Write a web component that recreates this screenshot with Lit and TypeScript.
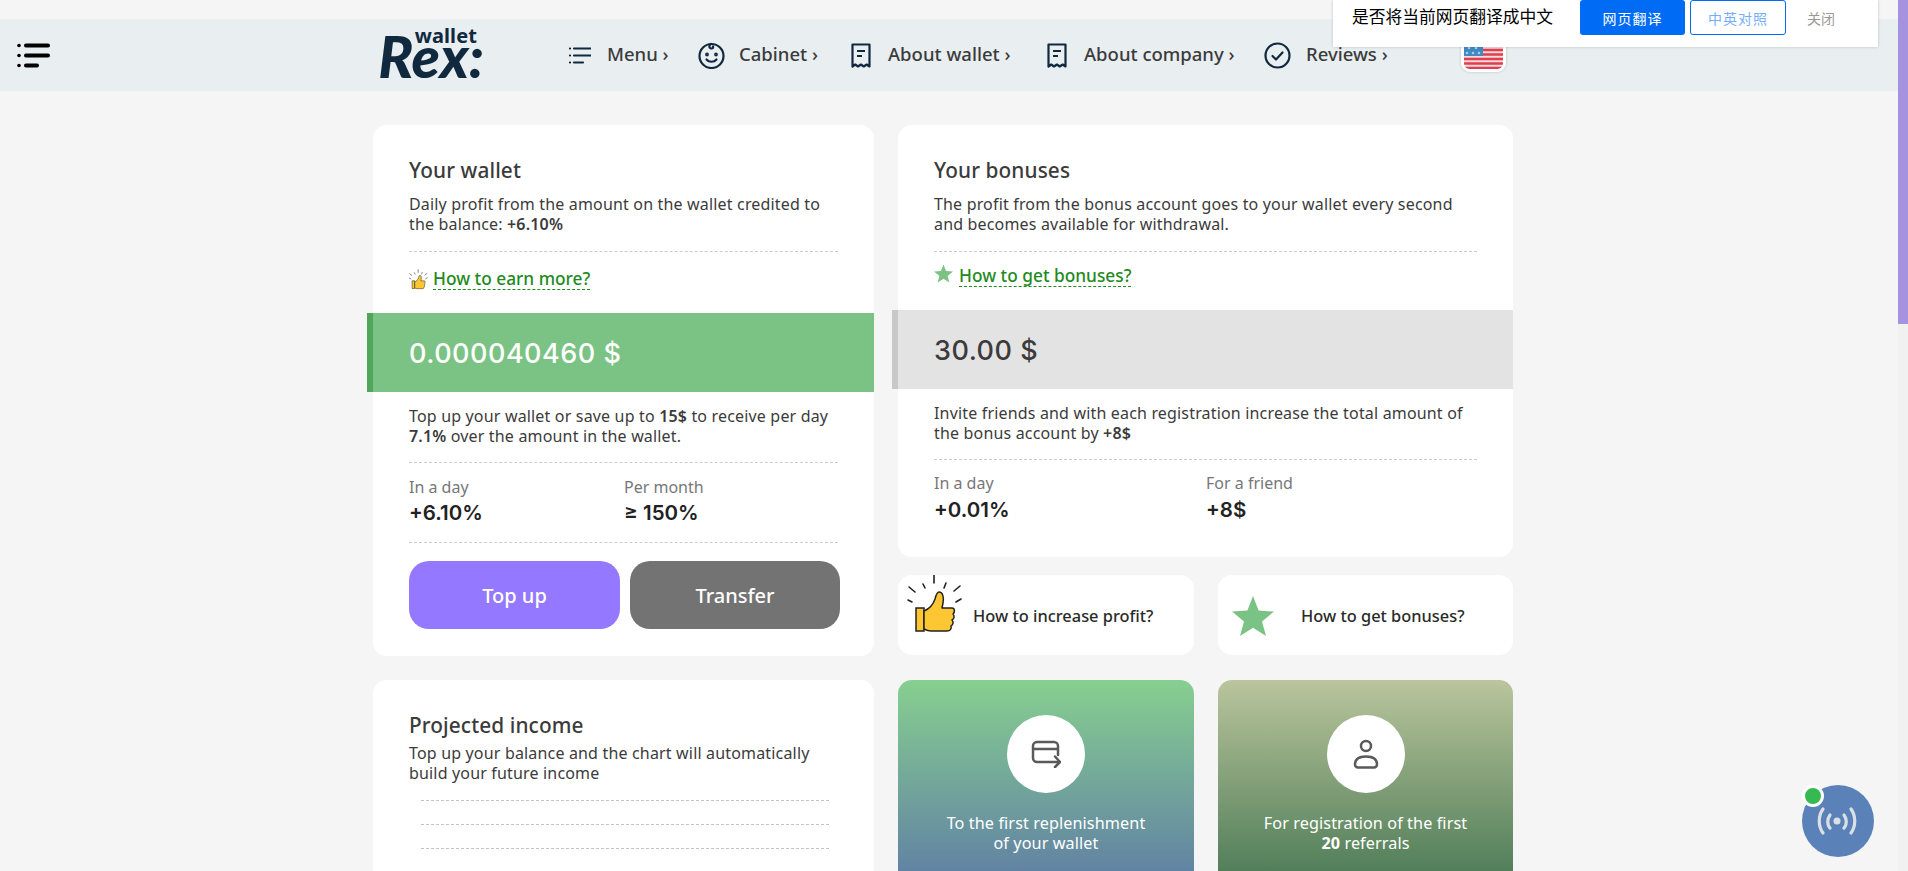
import { LitElement, html, css, svg } from 'lit';
import { customElement } from 'lit/decorators.js';

const receipt = svg`<path d="M1.5 1.5h17v22l-2.8-2-2.9 2-2.9-2-2.9 2-2.8-2-2.7 2z" fill="none" stroke="#10293f" stroke-width="2.2" stroke-linejoin="round"/><path d="M6 8h8M6 13h5" stroke="#10293f" stroke-width="2.2" fill="none"/>`;

const thumb = html`<svg class="thumb" viewBox="0 0 56 58">
  <path d="M27 0v8M2 12l6 5M16 9l2 4M39 8l-2 5M53 11l-6 5M1 25l4 2M54 24l-5 3" stroke="#222" stroke-width="1.6" fill="none" stroke-linecap="round"/>
  <rect x="9" y="33" width="8" height="23" fill="#fdc633" stroke="#222" stroke-width="1.5"/>
  <path d="M17 36c5-2 9-6 11-12 1-4 2-7 4-7 4 0 5 6 4 11l-1 5h10c3 0 3 4 1 6 2 2 1 5-1 6 2 2 1 5-1 6 1 3-1 5-4 5H24c-3 0-5-1-7-2z" fill="#fdc633" stroke="#222" stroke-width="1.5" stroke-linejoin="round"/>
</svg>`;

const star = html`<svg class="star" viewBox="0 0 42 40"><path d="M21 0l5.600 14.600L42 15.500 30 25.400 34 40 21 31.800 8 40l4-14.600L0 15.500l15.400-.9z" fill="#7bc384"/></svg>`;

@customElement('app-root')
export class AppRoot extends LitElement {
  static styles = css`
    :host {
      display: block;
      position: relative;
      height: 100vh;
      overflow: hidden;
      background: #f5f5f5;
      font-family: 'Noto Sans', sans-serif;
      color: #3b3b3b;
    }

    /* header */
    .header {
      display: flex;
      align-items: center;
      width: 1898px;
      height: 72px;
      margin-top: 19px;
      padding-left: 17px;
      box-sizing: border-box;
      background: #e9eef1;
    }
    .burger {
      width: 33px;
      height: 25px;
      flex: none;
    }
    .logo {
      display: flex;
      flex-direction: column;
      align-items: flex-end;
      width: 104px;
      margin: 0 0 5px 330px;
      color: #10293f;
      line-height: 1;
      flex: none;
    }
    .logo-top {
      font: 700 20px/14px 'Noto Sans', sans-serif;
      margin-right: 7px;
      margin-bottom: -7px;
      letter-spacing: 0.1px;
    }
    .logo-main {
      font: italic 900 58px/40px Lato, sans-serif;
      letter-spacing: 0;
    }
    .nav {
      display: grid;
      grid-template-columns: 129px 153px 196px 217px 197px;
      margin-left: 85px;
      flex: none;
    }
    .nav-item {
      display: flex;
      align-items: center;
      gap: 16px;
      font-size: 18.5px;
      font-weight: 500;
      white-space: nowrap;
      height: 28px;
    }
    .nav-item span {
      margin-top: -3px;
    }
    .nav-item.cabinet { gap: 14px; }
    .nav-item.doc { gap: 17px; }
    .nav-item.reviews { gap: 15px; }
    .flag {
      flex: none;
      width: 45px;
      height: 45px;
      margin-bottom: 11px;
      box-sizing: border-box;
      border: 3px solid #fff;
      border-radius: 9px;
      overflow: hidden;
      box-shadow: 0 0 3px rgba(0, 0, 0, 0.2);
    }
    .flag svg {
      display: block;
      width: 100%;
      height: 100%;
    }

    /* layout */
    .main {
      display: grid;
      grid-template-columns: 501px 615px;
      column-gap: 24px;
      margin: 34px 0 0 373px;
      align-items: start;
    }
    .col {
      display: flex;
      flex-direction: column;
    }
    .gap-left {
      gap: 24px;
    }
    .card {
      background: #fff;
      border-radius: 14px;
      padding: 33px 0 27px;
    }
    .inner {
      padding: 0 36px;
    }
    .title {
      font-size: 20.8px;
      font-weight: 500;
      line-height: 24px;
      letter-spacing: 0.1px;
    }
    .text {
      font-size: 16px;
      line-height: 20px;
      letter-spacing: 0.17px;
      white-space: nowrap;
    }
    .text b {
      font-weight: 600;
    }
    .after-title {
      margin-top: 12px;
    }
    .dash {
      border-top: 1px dashed #ccc;
    }
    .link-row {
      display: flex;
      align-items: flex-start;
      gap: 5px;
    }
    .link {
      display: block;
      color: #1f8a22;
      font-size: 17.3px;
      font-weight: 500;
      line-height: 20px;
      border-bottom: 1px dashed #1f8a22;
      white-space: nowrap;
    }
    .thumb {
      display: block;
      width: 19px;
      height: 21px;
      flex: none;
    }
    .star {
      display: block;
      width: 19px;
      height: 19px;
      flex: none;
    }
    .band {
      display: flex;
      align-items: center;
      height: 79px;
      box-sizing: border-box;
      margin-left: -6px;
      padding: 2px 0 0 36px;
      border-left: 6px solid;
      font-family: Inter, sans-serif;
      font-size: 27px;
      font-weight: 500;
      letter-spacing: 0.5px;
    }
    .band.green {
      background: #7bc384;
      border-color: #4fa55a;
      color: #fff;
    }
    .band.grey {
      background: #e3e3e3;
      border-color: #c8c8c8;
      color: #3b3b3b;
    }
    .stats {
      display: grid;
    }
    .label {
      color: #777;
      font-size: 16px;
      line-height: 20px;
    }
    .value {
      color: #222;
      font-family: Inter, sans-serif;
      font-size: 20.5px;
      font-weight: 600;
      line-height: 26px;
    }

    /* wallet card spacing */
    .wallet .dash-a { margin-top: 17px; }
    .wallet .link-row { margin-top: 12px; padding-top: 5px; }
    .wallet .band { margin-top: 23px; }
    .wallet .after-band { margin-top: 14px; }
    .wallet .dash-b { margin-top: 16px; }
    .wallet .stats { grid-template-columns: 215px 1fr; margin-top: 14px; }
    .wallet .value { margin-top: 3px; }
    .wallet .dash-c { margin-top: 16px; }

    .buttons {
      display: grid;
      grid-template-columns: 211px 210px;
      gap: 10px;
      margin-top: 18px;
    }
    .btn {
      display: flex;
      align-items: center;
      justify-content: center;
      height: 68px;
      border-radius: 20px;
      color: #fff;
      font-size: 20px;
      font-weight: 500;
    }
    .btn.violet { background: #9478ff; }
    .btn.grey { background: #737373; }

    /* bonus card spacing */
    .bonus { padding-bottom: 34px; }
    .bonus .dash-a { margin-top: 17px; }
    .bonus .link-row { margin-top: 14px; gap: 6px; }
    .bonus .star { margin-top: -2px; }
    .bonus .band { margin-top: 23px; }
    .bonus .after-band { margin-top: 14px; }
    .bonus .dash-b { margin-top: 16px; }
    .bonus .stats { grid-template-columns: 272px 1fr; margin-top: 13px; }
    .bonus .value { margin-top: 4px; }

    .duo {
      display: grid;
      grid-template-columns: 296px 295px;
      column-gap: 24px;
    }
    .mini-row { margin-top: 18px; }
    .mini {
      display: flex;
      align-items: center;
      height: 80px;
      background: #fff;
      border-radius: 14px;
      box-sizing: border-box;
      color: #2a2a2a;
      font-size: 16.4px;
      font-weight: 500;
      white-space: nowrap;
    }
    .mini.a {
      padding-left: 9px;
      gap: 10px;
    }
    .mini.a .thumb {
      width: 56px;
      height: 58px;
      margin-top: -22px;
    }
    .mini.b {
      padding-left: 14px;
      gap: 27px;
    }
    .mini.b .star {
      width: 42px;
      height: 40px;
      margin-top: 1px;
    }
    .promo-row { margin-top: 25px; }
    .promo {
      display: flex;
      flex-direction: column;
      align-items: center;
      height: 205px;
      padding-top: 35px;
      box-sizing: border-box;
      border-radius: 14px 14px 0 0;
      color: #fff;
      font-size: 16.2px;
      line-height: 20px;
      letter-spacing: 0.1px;
      text-align: center;
    }
    .promo.a { background: linear-gradient(#87cf90, #5f7ea4); }
    .promo.b { background: linear-gradient(#bac59c, #4a7a55); }
    .promo b { font-weight: 700; }
    .circle {
      display: flex;
      align-items: center;
      justify-content: center;
      width: 78px;
      height: 78px;
      margin-bottom: 20px;
      border-radius: 50%;
      background: #fff;
    }

    /* projected income */
    .income .text { margin-top: 6px; }
    .grid-lines {
      margin: 17px 9px 0 12px;
    }
    .grid-lines div {
      height: 23px;
      border-top: 1px dashed #c4c4c4;
    }

    /* overlays */
    .translate {
      position: absolute;
      top: 0;
      left: 1333px;
      width: 545px;
      height: 47px;
      display: flex;
      align-items: flex-start;
      box-sizing: border-box;
      padding-left: 19px;
      background: #fff;
      box-shadow: 0 0 3px rgba(0, 0, 0, 0.2);
      font-family: 'Noto Sans CJK SC', sans-serif;
    }
    .translate-msg {
      width: 228px;
      font-size: 16.75px;
      line-height: 32px;
      color: #000;
      white-space: nowrap;
    }
    .translate-btn {
      display: flex;
      align-items: center;
      justify-content: center;
      height: 35px;
      box-sizing: border-box;
      border-radius: 3px;
      font-size: 14px;
      letter-spacing: 1px;
    }
    .translate-btn.primary {
      width: 105px;
      background: #006bf5;
      color: #fff;
    }
    .translate-btn.outline {
      width: 96px;
      margin-left: 5px;
      border: 1px solid #006bf5;
      color: #74aefb;
    }
    .translate-close {
      margin-left: 21px;
      height: 37px;
      line-height: 37px;
      font-size: 14px;
      color: #999;
    }
    .scrollbar {
      position: absolute;
      top: 0;
      right: 0;
      width: 10px;
      height: 100%;
      background: #f1f1f1;
    }
    .scrollbar div {
      height: 324px;
      background: #a593e0;
    }
    .live {
      position: absolute;
      left: 1802px;
      top: 785px;
      width: 72px;
      height: 72px;
      border-radius: 50%;
      background: #5b82b8;
    }
    .live svg {
      display: block;
      width: 72px;
      height: 72px;
    }
    .live-dot {
      position: absolute;
      left: 0;
      top: 0;
      width: 16px;
      height: 16px;
      border: 3px solid #fff;
      border-radius: 50%;
      background: #35b950;
    }
  `;

  render() {
    return html`
      <div class="header">
        <svg class="burger" viewBox="0 0 33 25">
          <path d="M9 2.500h22M9 12.500h22M9 22.500h11" stroke="#000" stroke-width="4" stroke-linecap="round"/>
          <circle cx="2" cy="2.500" r="1.800"/><circle cx="2" cy="12.500" r="1.800"/><circle cx="2" cy="22.500" r="1.800"/>
        </svg>
        <div class="logo">
          <div class="logo-top">wallet</div>
          <div class="logo-main">Rex:</div>
        </div>
        <div class="nav">
          <div class="nav-item">
            <svg width="22" height="17" viewBox="0 0 22 17"><path d="M5 1.500h17M5 8.500h17M5 15.500h9" stroke="#10293f" stroke-width="2.200" stroke-linecap="round"/><circle cx="1" cy="1.500" r="1"/><circle cx="1" cy="8.500" r="1"/><circle cx="1" cy="15.500" r="1"/></svg>
            <span>Menu ›</span>
          </div>
          <div class="nav-item cabinet">
            <svg width="27" height="27" viewBox="0 0 27 27" fill="none" stroke="#10293f" stroke-width="2.200" stroke-linecap="round"><circle cx="13.500" cy="14" r="12"/><path d="M13 2c-2 1-2.500 4 .5 4.500 1.500 0 2-1 1.500-2M8.500 17.500c2.500 3 7.500 3 10 0"/><circle cx="9" cy="12.500" r=".8"/><circle cx="18" cy="12.500" r=".8"/></svg>
            <span>Cabinet ›</span>
          </div>
          <div class="nav-item doc">
            <svg width="20" height="25" viewBox="0 0 20 25">${receipt}</svg>
            <span>About wallet ›</span>
          </div>
          <div class="nav-item doc">
            <svg width="20" height="25" viewBox="0 0 20 25">${receipt}</svg>
            <span>About company ›</span>
          </div>
          <div class="nav-item reviews">
            <svg width="27" height="27" viewBox="0 0 27 27" fill="none" stroke="#10293f" stroke-width="2.200" stroke-linecap="round" stroke-linejoin="round"><circle cx="13.500" cy="13.500" r="12"/><path d="M8.500 14l3.500 3.500 6.500-7"/></svg>
            <span>Reviews ›</span>
          </div>
        </div>
        <div class="flag">
          <svg viewBox="0 0 39 39">
            <rect width="39" height="39" fill="#f7d9da"/>
            <path d="M0 20h39M0 24.500h39M0 29h39M0 33.500h39M0 38h39" stroke="#dd3f50" stroke-width="2.500"/>
            <rect width="19" height="26" fill="#3f8ac4"/>
            <g fill="#a9cde8"><circle cx="3" cy="23" r="1.300"/><circle cx="9" cy="23" r="1.300"/><circle cx="15" cy="23" r="1.300"/><circle cx="5" cy="18" r="1.300"/><circle cx="12" cy="18" r="1.300"/></g>
          </svg>
        </div>
      </div>

      <div class="main">
        <div class="col gap-left">
          <div class="card wallet">
            <div class="inner">
              <div class="title">Your wallet</div>
              <div class="text after-title">Daily profit from the amount on the wallet credited to<br />the balance: <b>+6.10%</b></div>
              <div class="dash dash-a"></div>
              <div class="link-row">${thumb}<span class="link">How to earn more?</span></div>
            </div>
            <div class="band green">0.000040460 $</div>
            <div class="inner">
              <div class="text after-band">Top up your wallet or save up to <b>15$</b> to receive per day<br /><b>7.1%</b> over the amount in the wallet.</div>
              <div class="dash dash-b"></div>
              <div class="stats">
                <div><div class="label">In a day</div><div class="value">+6.10%</div></div>
                <div><div class="label">Per month</div><div class="value">≥ 150%</div></div>
              </div>
              <div class="dash dash-c"></div>
              <div class="buttons">
                <div class="btn violet">Top up</div>
                <div class="btn grey">Transfer</div>
              </div>
            </div>
          </div>

          <div class="card income">
            <div class="inner">
              <div class="title">Projected income</div>
              <div class="text">Top up your balance and the chart will automatically<br />build your future income</div>
              <div class="grid-lines"><div></div><div></div><div></div><div></div></div>
            </div>
          </div>
        </div>

        <div class="col">
          <div class="card bonus">
            <div class="inner">
              <div class="title">Your bonuses</div>
              <div class="text after-title">The profit from the bonus account goes to your wallet every second<br />and becomes available for withdrawal.</div>
              <div class="dash dash-a"></div>
              <div class="link-row">${star}<span class="link">How to get bonuses?</span></div>
            </div>
            <div class="band grey">30.00 $</div>
            <div class="inner">
              <div class="text after-band">Invite friends and with each registration increase the total amount of<br />the bonus account by <b>+8$</b></div>
              <div class="dash dash-b"></div>
              <div class="stats">
                <div><div class="label">In a day</div><div class="value">+0.01%</div></div>
                <div><div class="label">For a friend</div><div class="value">+8$</div></div>
              </div>
            </div>
          </div>

          <div class="duo mini-row">
            <div class="mini a">${thumb}<span>How to increase profit?</span></div>
            <div class="mini b">${star}<span>How to get bonuses?</span></div>
          </div>

          <div class="duo promo-row">
            <div class="promo a">
              <div class="circle">
                <svg width="30" height="28" viewBox="0 0 30 28" fill="none" stroke="#5a5a5a" stroke-width="2.500" stroke-linecap="round" stroke-linejoin="round"><path d="M27 15V6a4 4 0 0 0-4-4H6a4 4 0 0 0-4 4v12a4 4 0 0 0 4 4h22M2 9h25M24 16.500l5 5.500-5 5"/></svg>
              </div>
              <div>To the first replenishment<br />of your wallet</div>
            </div>
            <div class="promo b">
              <div class="circle">
                <svg width="26" height="30" viewBox="0 0 26 30" fill="none" stroke="#5a5a5a" stroke-width="2.500" stroke-linejoin="round"><circle cx="13" cy="7" r="5"/><path d="M5 28.500h16a3 3 0 0 0 3-3c0-6-5-8-11-8s-11 2-11 8a3 3 0 0 0 3 3z"/></svg>
              </div>
              <div>For registration of the first<br /><b>20</b> referrals</div>
            </div>
          </div>
        </div>
      </div>

      <div class="translate">
        <div class="translate-msg">是否将当前网页翻译成中文</div>
        <div class="translate-btn primary">网页翻译</div>
        <div class="translate-btn outline">中英对照</div>
        <div class="translate-close">关闭</div>
      </div>

      <div class="scrollbar"><div></div></div>

      <div class="live">
        <svg viewBox="0 0 72 72" fill="none" stroke="#dbe0e6" stroke-width="3.200" stroke-linecap="round">
          <circle cx="35" cy="36" r="3.500" fill="#dbe0e6" stroke="none"/>
          <path d="M28 30c-3 4-3 10 0 13M42 30c3 4 3 10 0 13M21 24c-5 7-5 17 0 24M49 24c5 7 5 17 0 24"/>
        </svg>
        <div class="live-dot"></div>
      </div>
    `;
  }
}

declare global {
  interface HTMLElementTagNameMap {
    'app-root': AppRoot;
  }
}
